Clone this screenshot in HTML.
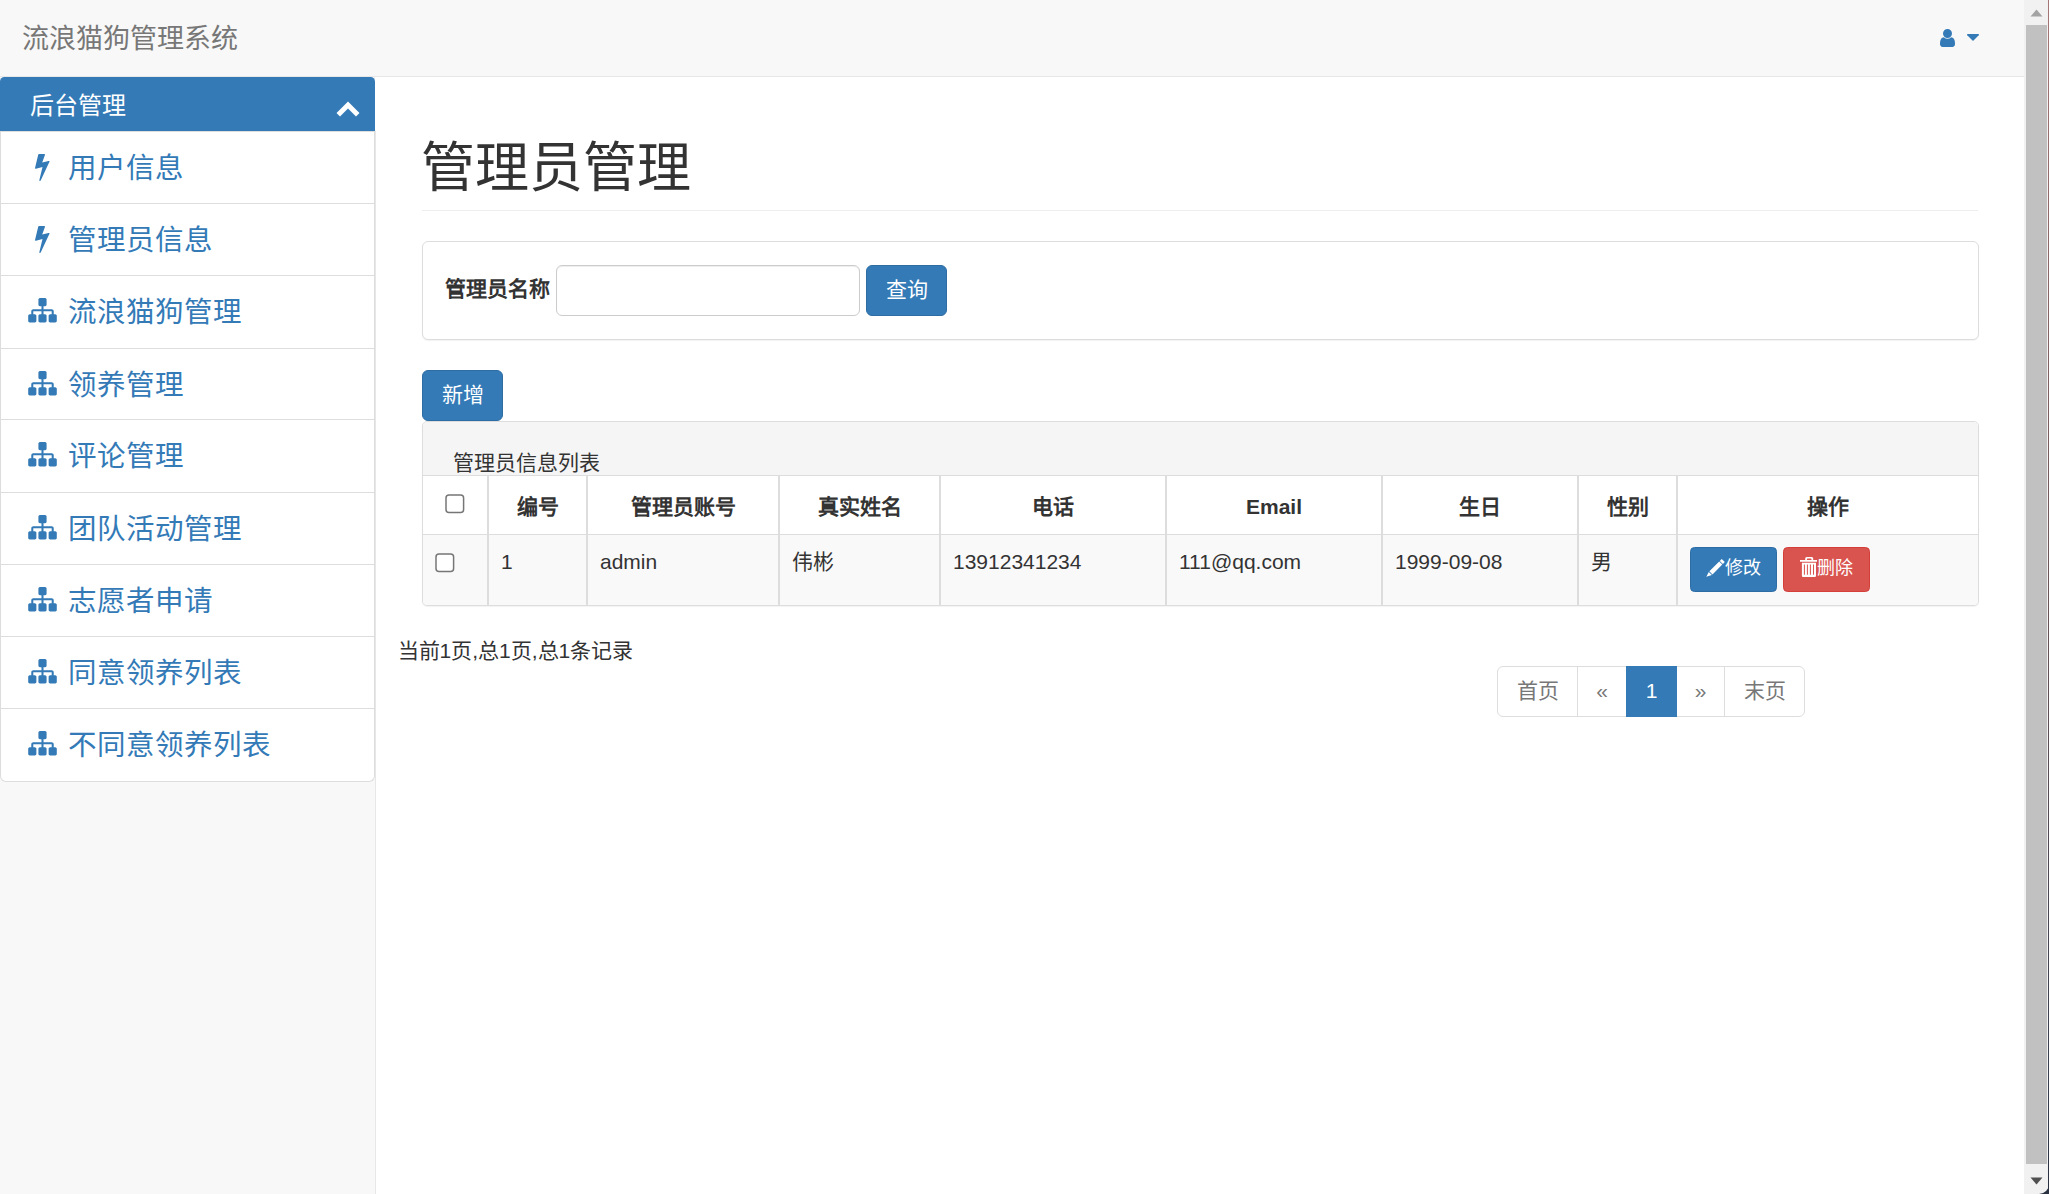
<!DOCTYPE html>
<html lang="zh-CN">
<head>
<meta charset="utf-8">
<title>管理员管理</title>
<style>
*{box-sizing:border-box;}
html,body{margin:0;padding:0;}
body{width:2049px;height:1194px;overflow:hidden;position:relative;background:#fff;
  font-family:"Liberation Sans",sans-serif;font-size:21px;line-height:30px;color:#333;}
a{color:#337ab7;text-decoration:none;}
.abs{position:absolute;}

/* navbar */
#nav{left:0;top:0;width:2024px;height:77px;background:#f8f8f8;border-bottom:1px solid #e7e7e7;}
#brand{left:22px;top:24px;font-size:27px;line-height:30px;color:#777;white-space:nowrap;}
#user{left:1940.4px;top:29px;width:15px;height:18px;}
#caret{left:1967px;top:34.2px;width:12px;height:6.8px;}

/* sidebar */
#side{left:0;top:77px;width:376px;height:1117px;background:#f8f8f8;border-right:1px solid #e7e7e7;}
#phead{left:0;top:77px;width:375px;height:54px;background:#337ab7;border-radius:4.5px 4.5px 0 0;color:#fff;}
#phead span{position:absolute;left:30px;top:14px;font-size:24px;line-height:30px;white-space:nowrap;}
#chev{left:336px;top:101px;width:24px;height:16px;}
#list{left:0;top:131px;width:375px;height:651px;background:#fff;border:1px solid #ddd;border-top:0;border-radius:0 0 6px 6px;overflow:hidden;}
.li{position:absolute;left:0;width:373px;height:73px;border-top:1px solid #ddd;font-size:28.5px;line-height:40px;color:#337ab7;white-space:nowrap;}
.li span{position:absolute;left:67px;top:16px;}
.li svg{position:absolute;}
.bolt{left:34px;top:22px;width:14.5px;height:27px;}
.site{left:26.5px;top:22px;width:29px;height:24.5px;}

/* main */
#h1{left:421px;top:138px;font-size:54px;line-height:60px;color:#333;white-space:nowrap;font-weight:normal;margin:0;}
#hr{left:422px;top:210px;width:1556px;height:1px;background:#eee;}
#search{left:422px;top:241px;width:1557px;height:99px;border:1px solid #ddd;border-radius:6px;background:#fff;box-shadow:0 1px 1px rgba(0,0,0,.05);}
#lbl{left:445px;top:274px;font-weight:bold;font-size:21px;line-height:30px;white-space:nowrap;}
#inp{left:556px;top:265px;width:304px;height:51px;border:1px solid #ccc;border-radius:6px;background:#fff;box-shadow:inset 0 1px 1px rgba(0,0,0,.075);}
.btn{position:absolute;color:#fff;text-align:center;white-space:nowrap;border-radius:6px;}
.bp{background:#337ab7;border:1px solid #2e6da4;}
.bd{background:#d9534f;border:1px solid #d43f3a;}
#q{left:866px;top:265px;width:81px;height:51px;line-height:47px;}
#add{left:422px;top:370px;width:81px;height:51px;line-height:47px;}

#tpanel{left:422px;top:421px;width:1557px;height:185px;border:1px solid #ddd;border-radius:5px;background:#fff;box-shadow:0 1px 1px rgba(0,0,0,.05);overflow:hidden;}
#thead{left:0;top:0;width:1555px;height:53px;background:#f5f5f5;}
#ttitle{left:30px;top:26px;font-size:21px;line-height:30px;white-space:nowrap;}
table{position:absolute;left:0;top:53px;width:1555px;border-collapse:collapse;table-layout:fixed;}
th,td{border:1px solid #ddd;border-left-width:2px;border-right-width:2px;padding:12px;vertical-align:top;text-align:left;font-size:21px;line-height:30px;overflow:hidden;white-space:nowrap;}
th{text-align:center;font-weight:bold;height:59px;border-bottom-width:1px;padding-top:16px;padding-bottom:8px;}
td{height:70px;background:#f9f9f9;}
tr>*:first-child{border-left:0;} tr>*:last-child{border-right:0;}
th{border-top:1px solid #ddd;} td{border-bottom:0;}
.cb{display:inline-block;width:20px;height:20px;vertical-align:top;}
.sm{position:absolute;top:0;height:45px;border-radius:4.5px;font-size:18px;line-height:41px;}

#info{left:397.5px;top:636px;white-space:nowrap;}
#pag{left:1497px;top:666px;height:51px;}
#pag div{position:absolute;top:0;height:51px;border:1px solid #ddd;background:#fff;color:#777;text-align:center;line-height:48px;white-space:nowrap;}

/* scrollbar */
#sb{left:2024px;top:0;width:24px;height:1194px;background:#f1f1f1;}
#thumb{left:2026px;top:25px;width:21px;height:1139px;background:#c1c1c1;}
#edge{left:2048px;top:0;width:1px;height:1194px;background:linear-gradient(#a57676,#6a5558 50%,#3a4050 90%,#2a3040);}
</style>
</head>
<body>
<div id="nav" class="abs"></div>
<div id="brand" class="abs">流浪猫狗管理系统</div>
<svg id="user" class="abs" viewBox="0 -1408 1280 1536"><path fill="#337ab7" transform="scale(1,-1)" d="M1280 137Q1280 28 1217.5 -50.0Q1155 -128 1067 -128H213Q125 -128 62.5 -50.0Q0 28 0 137Q0 222 8.5 297.5Q17 373 40.0 449.5Q63 526 98.5 580.5Q134 635 192.5 669.5Q251 704 327 704Q458 576 640.0 576.0Q822 576 953 704Q1029 704 1087.5 669.5Q1146 635 1181.5 580.5Q1217 526 1240.0 449.5Q1263 373 1271.5 297.5Q1280 222 1280 137ZM911.5 1295.5Q1024 1183 1024.0 1024.0Q1024 865 911.5 752.5Q799 640 640.0 640.0Q481 640 368.5 752.5Q256 865 256.0 1024.0Q256 1183 368.5 1295.5Q481 1408 640.0 1408.0Q799 1408 911.5 1295.5Z"/></svg>
<svg id="caret" class="abs" viewBox="0 -896 1024 576"><path fill="#337ab7" transform="scale(1,-1)" d="M1005 787 557 339Q538 320 512.0 320.0Q486 320 467 339L19 787Q0 806 0.0 832.0Q0 858 19.0 877.0Q38 896 64 896H960Q986 896 1005.0 877.0Q1024 858 1024.0 832.0Q1024 806 1005 787Z"/></svg>

<div id="side" class="abs"></div>
<div class="abs" style="left:375px;top:77px;width:1px;height:54px;background:#fff"></div>
<div id="phead" class="abs"><span>后台管理</span></div>
<svg id="chev" class="abs" viewBox="0 0 24 16"><path fill="#fff" d="M12 0.5 L23.5 12 L20 15.5 L12 7.5 L4 15.5 L0.5 12 Z"/></svg>
<div id="list" class="abs">
  <div class="li" style="top:0px"><svg class="bolt" viewBox="0 -1408 896 1664"><use href="#g-bolt"/></svg><span>用户信息</span></div>
  <div class="li" style="top:72px"><svg class="bolt" viewBox="0 -1408 896 1664"><use href="#g-bolt"/></svg><span>管理员信息</span></div>
  <div class="li" style="top:144px"><svg class="site" viewBox="0 -1408 1792 1536"><use href="#g-site"/></svg><span>流浪猫狗管理</span></div>
  <div class="li" style="top:217px"><svg class="site" viewBox="0 -1408 1792 1536"><use href="#g-site"/></svg><span>领养管理</span></div>
  <div class="li" style="top:288px"><svg class="site" viewBox="0 -1408 1792 1536"><use href="#g-site"/></svg><span>评论管理</span></div>
  <div class="li" style="top:361px"><svg class="site" viewBox="0 -1408 1792 1536"><use href="#g-site"/></svg><span>团队活动管理</span></div>
  <div class="li" style="top:433px"><svg class="site" viewBox="0 -1408 1792 1536"><use href="#g-site"/></svg><span>志愿者申请</span></div>
  <div class="li" style="top:505px"><svg class="site" viewBox="0 -1408 1792 1536"><use href="#g-site"/></svg><span>同意领养列表</span></div>
  <div class="li" style="top:577px"><svg class="site" viewBox="0 -1408 1792 1536"><use href="#g-site"/></svg><span>不同意领养列表</span></div>
</div>

<h1 id="h1" class="abs">管理员管理</h1>
<div id="hr" class="abs"></div>
<div id="search" class="abs"></div>
<div id="lbl" class="abs">管理员名称</div>
<div id="inp" class="abs"></div>
<div id="q" class="btn bp">查询</div>
<div id="add" class="btn bp">新增</div>

<div id="tpanel" class="abs">
  <div id="thead" class="abs"></div>
  <div id="ttitle" class="abs">管理员信息列表</div>
  <table>
    <colgroup><col style="width:65px"><col style="width:99px"><col style="width:192px"><col style="width:161px"><col style="width:226px"><col style="width:216px"><col style="width:196px"><col style="width:99px"><col style="width:301px"></colgroup>
    <tr><th><svg class="cb" style="margin-top:2px" viewBox="0 0 20 20"><rect x="1" y="1" width="17.6" height="17.6" rx="3" fill="#fff" stroke="#767676" stroke-width="1.5"/></svg></th><th>编号</th><th>管理员账号</th><th>真实姓名</th><th>电话</th><th>Email</th><th>生日</th><th>性别</th><th>操作</th></tr>
    <tr><td><svg class="cb" style="margin-top:6px" viewBox="0 0 20 20"><rect x="1" y="1" width="17.6" height="17.6" rx="3" fill="#fff" stroke="#767676" stroke-width="1.5"/></svg></td><td>1</td><td>admin</td><td>伟彬</td><td>13912341234</td><td>111@qq.com</td><td>1999-09-08</td><td>男</td>
      <td style="position:relative;padding:0"><div style="position:absolute;left:12px;top:12px;width:280px;height:45px">
        <div class="btn bp sm" style="left:0;width:87px;"><svg style="width:19.4px;height:18px;vertical-align:-3px;margin-right:-0.4px" viewBox="0 0 19.4 18"><path fill="#fff" d="M0.3 17.8 L2.8 12.9 L5.9 16 Z M3.4 12.3 L13.2 2.5 L16.3 5.6 L6.5 15.4 Z M13.8 1.9 L15.7 0 L18.8 3.1 L16.9 5 Z"/></svg>修改</div>
        <div class="btn bd sm" style="left:93px;width:87px;"><svg style="width:17px;height:20px;vertical-align:-3px" viewBox="0 0 17 20"><path fill="#fff" fill-rule="evenodd" d="M5.2 3.1 V1.5 Q5.2 0 6.7 0 H11.7 Q13.2 0 13.2 1.5 V3.1 H11.5 V2.4 Q11.5 1.6 10.9 1.6 H7.5 Q6.9 1.6 6.9 2.4 V3.1 Z M0 3.1 H17 V4.8 H0 Z M1.9 5.8 H16 V19.1 Q16 19.9 15.2 19.9 H2.7 Q1.9 19.9 1.9 19.1 Z M3.9 7.6 V17.7 H4.9 V7.6 Z M6.9 7.6 V17.7 H7.9 V7.6 Z M9.9 7.6 V17.7 H10.9 V7.6 Z M13 7.6 V17.7 H14 V7.6 Z"/></svg>删除</div>
      </div></td></tr>
  </table>
</div>

<div id="info" class="abs">当前1页,总1页,总1条记录</div>
<div id="pag" class="abs">
  <div style="left:0;width:81px;border-radius:6px 0 0 6px;">首页</div>
  <div style="left:80px;width:50px;">«</div>
  <div style="left:129px;width:51px;background:#337ab7;border-color:#337ab7;color:#fff;z-index:2">1</div>
  <div style="left:179px;width:49px;">»</div>
  <div style="left:227px;width:81px;border-radius:0 6px 6px 0;">末页</div>
</div>

<div id="sb" class="abs"></div>
<div id="thumb" class="abs"></div>
<svg class="abs" style="left:2030px;top:9px;width:13px;height:8px" viewBox="0 0 13 8"><path fill="#a3a3a3" d="M6.5 0.5 L12.5 7.5 L0.5 7.5 Z"/></svg>
<svg class="abs" style="left:2030px;top:1177px;width:13px;height:8px" viewBox="0 0 13 8"><path fill="#505050" d="M0.5 0.5 L12.5 0.5 L6.5 7.5 Z"/></svg>
<div id="edge" class="abs"></div>
<svg class="abs" style="left:2039px;top:1184px;width:10px;height:10px" viewBox="0 0 10 10"><path fill="#2a3242" d="M10 0 L10 10 L0 10 A10 10 0 0 0 10 0 Z"/></svg>

<svg width="0" height="0" style="position:absolute">
<defs>
<path id="g-bolt" fill="#337ab7" transform="scale(1,-1)" d="M885 970Q903 950 892 926L352 -231Q339 -256 310 -256Q306 -256 296 -254Q279 -249 270.5 -235.0Q262 -221 266 -205L463 603L57 502Q53 501 45 501Q27 501 14 512Q-4 527 1 551L202 1376Q206 1390 218.0 1399.0Q230 1408 246 1408H574Q593 1408 606.0 1395.5Q619 1383 619 1366Q619 1358 614 1348L443 885L839 983Q847 985 851 985Q870 985 885 970Z"/>
<path id="g-site" fill="#337ab7" transform="scale(1,-1)" d="M1792 288V-32Q1792 -72 1764.0 -100.0Q1736 -128 1696 -128H1376Q1336 -128 1308.0 -100.0Q1280 -72 1280 -32V288Q1280 328 1308.0 356.0Q1336 384 1376 384H1472V576H960V384H1056Q1096 384 1124.0 356.0Q1152 328 1152 288V-32Q1152 -72 1124.0 -100.0Q1096 -128 1056 -128H736Q696 -128 668.0 -100.0Q640 -72 640 -32V288Q640 328 668.0 356.0Q696 384 736 384H832V576H320V384H416Q456 384 484.0 356.0Q512 328 512 288V-32Q512 -72 484.0 -100.0Q456 -128 416 -128H96Q56 -128 28.0 -100.0Q0 -72 0 -32V288Q0 328 28.0 356.0Q56 384 96 384H192V576Q192 628 230.0 666.0Q268 704 320 704H832V896H736Q696 896 668.0 924.0Q640 952 640 992V1312Q640 1352 668.0 1380.0Q696 1408 736 1408H1056Q1096 1408 1124.0 1380.0Q1152 1352 1152 1312V992Q1152 952 1124.0 924.0Q1096 896 1056 896H960V704H1472Q1524 704 1562.0 666.0Q1600 628 1600 576V384H1696Q1736 384 1764.0 356.0Q1792 328 1792 288Z"/>
</defs>
</svg>
</body>
</html>
